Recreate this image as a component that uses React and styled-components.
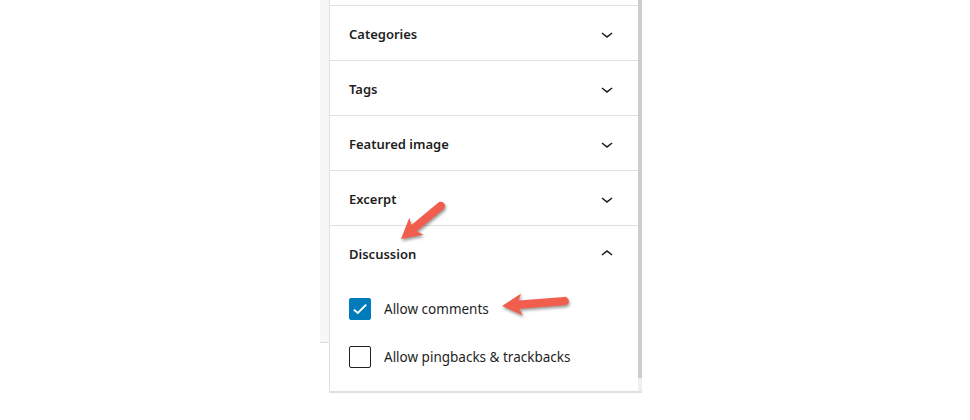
import React from "react";
import styled, { createGlobalStyle } from "styled-components";

const GlobalStyle = createGlobalStyle`
  html, body {
    margin: 0;
    padding: 0;
    background: #fff;
  }
  body {
    font-family: "Noto Sans", "Open Sans", Arial, sans-serif;
    color: #1e1e1e;
  }
`;

const Stage = styled.div`
  position: relative;
  width: 970px;
  height: 420px;
  display: flex;
  align-items: flex-start;
  padding-left: 320px;
  box-sizing: border-box;
  overflow: hidden;
`;

const Gutter = styled.div`
  width: 10px;
  height: 342px;
  background: #f7f7f7;
  border-bottom: 1px solid #dcdcdc;
`;

const Panel = styled.div`
  display: flex;
  width: 312px;
  border-left: 1px solid #e0e0e0;
  border-bottom: 2px solid #e0e0e0;
  margin-left: -1px;
  height: 391px;
`;

const Content = styled.div`
  flex: 1;
  padding-top: 5px;
`;

const Scrollbar = styled.div`
  width: 4px;
  display: flex;
  flex-direction: column;
  background: #efefef;
`;

const Thumb = styled.div`
  height: 378px;
  background: #cdcdcd;
`;

const Section = styled.div`
  border-top: 1px solid #e0e0e0;
`;

const Header = styled.div`
  height: 54px;
  box-sizing: border-box;
  padding: 2px 19px 0 19px;
  display: flex;
  align-items: center;
  justify-content: space-between;
  font-size: 13px;
  font-weight: 600;
`;

const Body = styled.div`
  display: flex;
  flex-direction: column;
  gap: 26px;
  padding: 18px 19px 0;
`;

const Row = styled.label`
  display: flex;
  align-items: center;
  gap: 13px;
  font-size: 13.5px;
  height: 22px;
`;

const Box = styled.span`
  width: 22px;
  height: 22px;
  box-sizing: border-box;
  border-radius: 2px;
  border: 1px solid ${(p) => (p.checked ? "#007cba" : "#1e1e1e")};
  background: ${(p) => (p.checked ? "#007cba" : "#fff")};
  display: flex;
  align-items: center;
  justify-content: center;
`;

const Overlay = styled.svg`
  position: absolute;
  left: 0;
  top: 0;
  pointer-events: none;
  filter: drop-shadow(1px 2px 1.5px rgba(0, 0, 0, 0.4));
`;

const Chevron = ({ up }) => (
  <svg width="24" height="24" viewBox="0 0 24 24">
    <path
      fill="#1e1e1e"
      d={
        up
          ? "M6.5 12.4L12 8l5.5 4.4-.9 1.2L12 10l-4.6 3.6-1-1.2z"
          : "M17.5 11.6L12 16l-5.5-4.4.9-1.2L12 14l4.6-3.6 1 1.2z"
      }
    />
  </svg>
);

const Check = () => (
  <svg width="20" height="20" viewBox="0 0 20 20">
    <path d="M3.8 10.6l4 3.4L16.2 5.6" fill="none" stroke="#fff" strokeWidth="1.9" />
  </svg>
);

const arrowPath = (len) =>
  `M0 0 L20 -11 L17 -4.2 L${len - 4.2} -4.2 A4.2 4.2 0 0 1 ${len - 4.2} 4.2 L17 4.2 L20 11 Z`;

const Arrow = ({ x, y, len, angle }) => (
  <path
    d={arrowPath(len)}
    fill="#f25e4d"
    transform={`translate(${x} ${y}) rotate(${angle})`}
  />
);

const closed = ["Categories", "Tags", "Featured image", "Excerpt"];

export default function App() {
  return (
    <>
      <GlobalStyle />
      <Stage>
        <Gutter />
        <Panel>
          <Content>
            {closed.map((t) => (
              <Section key={t}>
                <Header>
                  {t}
                  <Chevron />
                </Header>
              </Section>
            ))}
            <Section>
              <Header>
                Discussion
                <Chevron up />
              </Header>
              <Body>
                <Row>
                  <Box checked>
                    <Check />
                  </Box>
                  Allow comments
                </Row>
                <Row>
                  <Box />
                  Allow pingbacks &amp; trackbacks
                </Row>
              </Body>
            </Section>
          </Content>
          <Scrollbar>
            <Thumb />
          </Scrollbar>
        </Panel>
        <Overlay width="970" height="420">
          <Arrow x={401} y={239} len={56} angle={-39.7} />
          <Arrow x={502} y={306} len={67} angle={-4.5} />
        </Overlay>
      </Stage>
    </>
  );
}
